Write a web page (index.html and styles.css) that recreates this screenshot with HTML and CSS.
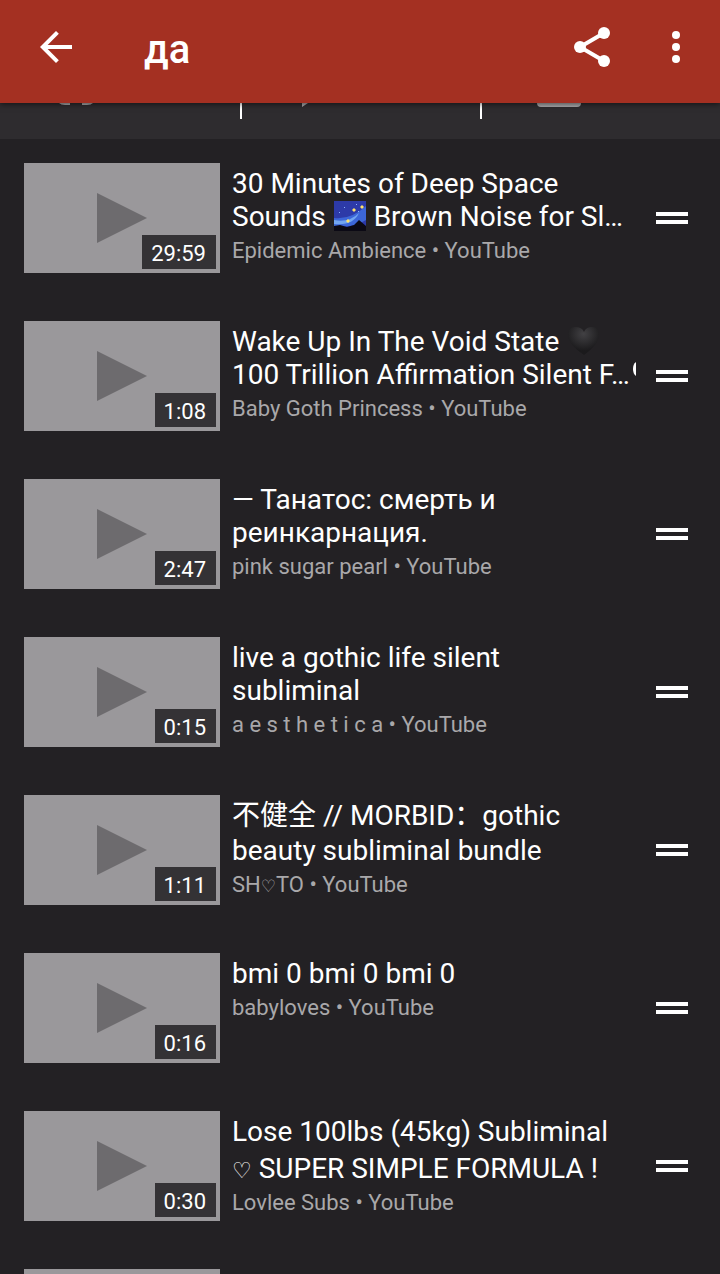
FILE: index.html
```html
<!DOCTYPE html>
<html lang="ru">
<head>
    <meta charset="utf-8">
    <meta name="viewport" content="width=device-width, initial-scale=1">
    <title>да</title>
    <link rel="stylesheet" href="styles.css">
</head>
<body>
    <header class="toolbar">
        <button type="button" class="icon-btn back" aria-label="Back">
            <svg width="48" height="48" viewBox="0 0 24 24"><path fill="#fff" d="M20 11H7.83l5.59-5.59L12 4l-8 8 8 8 1.41-1.41L7.83 13H20v-2z"/></svg>
        </button>
        <h1>да</h1>
        <button type="button" class="icon-btn" aria-label="Share">
            <svg width="48" height="48" viewBox="0 0 48 48">
                <path d="M36 10L12 24l24 14" fill="none" stroke="#fff" stroke-width="4"/>
                <circle cx="36" cy="10" r="6" fill="#fff"/>
                <circle cx="12" cy="24" r="6" fill="#fff"/>
                <circle cx="36" cy="38" r="6" fill="#fff"/>
            </svg>
        </button>
        <button type="button" class="icon-btn more" aria-label="More">
            <svg width="8" height="32" viewBox="0 0 8 32">
                <circle cx="4" cy="4" r="4" fill="#fff"/>
                <circle cx="4" cy="16" r="4" fill="#fff"/>
                <circle cx="4" cy="28" r="4" fill="#fff"/>
            </svg>
        </button>
    </header>

    <!-- play controls, mostly scrolled under the toolbar -->
    <nav class="controls">
        <button type="button" aria-label="Background">
            <svg width="48" height="6" viewBox="0 0 48 6"><path fill="#a9a8aa" d="M3 0h11v2H9Q5 2 3 0zM26 0h11q-2 2-6 2h-5z"/></svg>
        </button>
        <button type="button" aria-label="Play all">
            <svg width="48" height="6" viewBox="0 0 48 6"><path fill="#a9a8aa" d="M6 0h6L6 4z"/></svg>
        </button>
        <button type="button" aria-label="Popup">
            <svg width="48" height="6" viewBox="0 0 48 6"><path fill="#a9a8aa" d="M1 0h44q0 4-4 4H5q-4 0-4-4z"/></svg>
        </button>
    </nav>

    <ul class="playlist">
        <li class="item">
            <div class="thumb"><span class="time">29:59</span></div>
            <div class="info">
                <h2>30 Minutes of Deep Space<br>Sounds <svg class="emoji" role="img" aria-label="Milky way" viewBox="0 0 32 30">
                    <rect width="32" height="30" fill="#2d3aa8"/>
                    <path fill="#3c66d8" d="M0 17Q17 19 32 5v14Q18 28 0 25z"/>
                    <path fill="#72a5f0" d="M0 19q15 3 25-7-6 13-25 11z"/>
                    <path fill="#0b0914" d="M0 25l6-1 7 2 7-2 5-5 7 6v5H0z"/>
                    <path fill="#ffe36a" d="M14 18l2 2-2 2-2-2zM20 7l2 2-2 2-2-2zM28 4l2 2-2 2-2-2z"/>
                    <path fill="#8eb5ff" d="M10 6h1v1h-1zM22 3h1v1h-1zM24 10h1v1h-1zM5 11h1v1H5z"/>
                </svg> Brown Noise for Sl…</h2>
                <p>Epidemic Ambience • YouTube</p>
            </div>
            <button type="button" class="handle" aria-label="Reorder"></button>
        </li>
        <li class="item">
            <div class="thumb"><span class="time">1:08</span></div>
            <div class="info">
                <h2>Wake Up In The Void State <svg class="emoji" role="img" aria-label="Black heart" viewBox="0 0 32 30">
                    <defs>
                        <radialGradient id="heart" cx=".5" cy=".25" r=".6">
                            <stop offset="0" stop-color="#424144"/>
                            <stop offset="1" stop-color="#1b1a1c"/>
                        </radialGradient>
                    </defs>
                    <path fill="url(#heart)" d="M17 29Q1 18 1 9 1 1 8 1q7 0 9 5 2-5 8-5 7 0 7 8 0 9-15 20z"/>
                </svg><br>100 Trillion Affirmation Silent F…<svg class="cut" viewBox="0 0 6 14"><path fill="#fff" d="M6 0Q3 2 3 7t3 7z"/></svg></h2>
                <p>Baby Goth Princess • YouTube</p>
            </div>
            <button type="button" class="handle" aria-label="Reorder"></button>
        </li>
        <li class="item">
            <div class="thumb"><span class="time">2:47</span></div>
            <div class="info">
                <h2>— Танатос: смерть и<br>реинкарнация.</h2>
                <p>pink sugar pearl • YouTube</p>
            </div>
            <button type="button" class="handle" aria-label="Reorder"></button>
        </li>
        <li class="item">
            <div class="thumb"><span class="time">0:15</span></div>
            <div class="info">
                <h2>live a gothic life silent<br>subliminal</h2>
                <p>a e s t h e t i c a • YouTube</p>
            </div>
            <button type="button" class="handle" aria-label="Reorder"></button>
        </li>
        <li class="item">
            <div class="thumb"><span class="time">1:11</span></div>
            <div class="info">
                <h2 class="cjk" lang="zh-CN">不健全 // MORBID：gothic<br>beauty subliminal bundle</h2>
                <p>SH<span class="sym">♡</span>TO • YouTube</p>
            </div>
            <button type="button" class="handle" aria-label="Reorder"></button>
        </li>
        <li class="item">
            <div class="thumb"><span class="time">0:16</span></div>
            <div class="info">
                <h2>bmi 0 bmi 0 bmi 0</h2>
                <p>babyloves • YouTube</p>
            </div>
            <button type="button" class="handle" aria-label="Reorder"></button>
        </li>
        <li class="item">
            <div class="thumb"><span class="time">0:30</span></div>
            <div class="info">
                <h2 class="symbols">Lose 100lbs (45kg) Subliminal<br><span class="sym">♡</span> SUPER SIMPLE FORMULA !</h2>
                <p>Lovlee Subs • YouTube</p>
            </div>
            <button type="button" class="handle" aria-label="Reorder"></button>
        </li>
        <li class="item">
            <div class="thumb"></div>
        </li>
    </ul>
</body>
</html>
```
FILE: styles.css
```css
* {
    box-sizing: border-box;
}
html {
    background: #232124;
    scrollbar-width: none;
}
body {
    margin: 0;
    background: #232124;
    color: #fff;
    font-family: Roboto, "Noto Sans CJK SC", "DejaVu Sans", sans-serif;
}
h1, h2, p, ul {
    margin: 0;
    padding: 0;
    font-weight: 400;
}
button {
    border: 0;
    padding: 0;
    background: none;
}
svg {
    display: block;
}

/* toolbar */
.toolbar {
    position: sticky;
    top: 0;
    z-index: 1;
    display: flex;
    align-items: center;
    height: 103px;
    padding: 0 40px 9px 32px;
    background: #a43022;
    box-shadow: 0 1px 6px rgba(0, 0, 0, 0.6);
}
.toolbar h1 {
    flex: 1;
    padding: 6px 0 0 64px;
    font-size: 40px;
    line-height: 48px;
    font-weight: 500;
}
.more {
    margin-left: 56px;
}

.controls {
    display: grid;
    grid-template-columns: repeat(3, 1fr);
    height: 36px;
    background: #2e2c2f;
}
.controls button {
    display: flex;
    height: 16px;
    padding-left: 56px;
}
.controls button + button {
    padding-left: 54px;
    border-left: 2px solid #fff;
}

/* list */
.playlist {
    list-style: none;
}
.item {
    display: flex;
    align-items: flex-start;
    padding: 24px 32px 24px 24px;
}
.thumb {
    position: relative;
    flex: none;
    width: 196px;
    height: 110px;
    background: #9a989b;
}
.thumb::before {
    content: "";
    position: absolute;
    left: 73px;
    top: 30px;
    border-left: 50px solid #6d6b6e;
    border-top: 25px solid transparent;
    border-bottom: 25px solid transparent;
}
.time {
    position: absolute;
    right: 4px;
    bottom: 4px;
    padding: 4px 10px 0 9px;
    background: #343235;
    font-size: 22px;
    line-height: 30px;
}
.info {
    flex: 1;
    min-width: 0;
    margin: 0 20px 0 12px;
    padding-top: 4px;
    overflow: hidden;
    white-space: nowrap;
}
.info h2 {
    font-size: 28px;
    line-height: 33px;
}
/* lines with fallback glyphs are taller */
.info h2.cjk {
    margin: -1px 0;
    line-height: 35px;
}
.info h2.symbols {
    margin: -2px 0;
    line-height: 37px;
}
.info p {
    padding-top: 5px;
    color: #a9a8aa;
    font-size: 22px;
    line-height: 26px;
}
.sym {
    font-family: "DejaVu Sans", sans-serif;
    font-size: 22px;
    line-height: 1;
}
p .sym {
    font-size: 17px;
}
.emoji {
    display: inline-block;
    width: 32px;
    height: 30px;
    margin: -4px 1px;
    vertical-align: -1px;
}
.cut {
    display: inline-block;
    width: 6px;
    height: 14px;
    vertical-align: 8px;
}
.handle {
    width: 32px;
    height: 12px;
    margin-top: 49px;
    border-top: 4px solid #fff;
    border-bottom: 4px solid #fff;
}
```
